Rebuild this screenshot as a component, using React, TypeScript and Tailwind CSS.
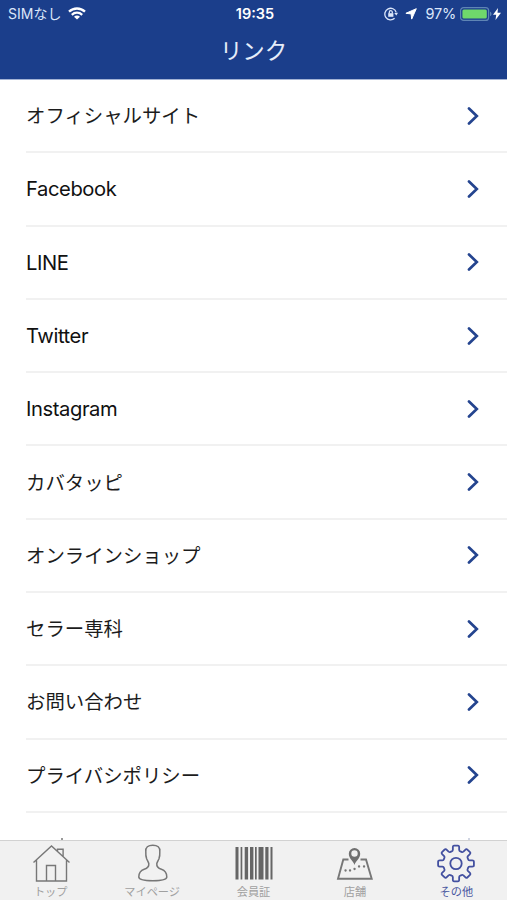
import type { ReactNode } from 'react';

const links = [
  { label: 'オフィシャルサイト' },
  { label: 'Facebook', latin: true },
  { label: 'LINE', latin: true },
  { label: 'Twitter', latin: true },
  { label: 'Instagram', latin: true },
  { label: 'カバタッピ' },
  { label: 'オンラインショップ' },
  { label: 'セラー専科' },
  { label: 'お問い合わせ' },
  { label: 'プライバシポリシー' },
];

function StatusBar() {
  return (
    <div className="flex h-7 items-center justify-between pl-2 pr-[5px] text-[14px] leading-none">
      <div className="flex w-[180px] items-center gap-[7px]">
        <span className="text-[#dbe6fa]">SIMなし</span>
        <svg className="-mt-px" width="18" height="13" viewBox="0 0 18 13" fill="none" stroke="white" strokeWidth="2.3">
          <path d="M1 4.7C5.5.4 12.5.4 17 4.7" />
          <path d="M3.8 7.8c3-2.8 7.4-2.8 10.4 0" />
          <path d="M9 12.6 6 9.8c1.7-1.6 4.3-1.6 6 0z" fill="white" stroke="none" />
        </svg>
      </div>
      <span className="text-[14.5px] font-semibold text-white">19:35</span>
      <div className="flex w-[180px] items-center justify-end">
        <svg className="-mt-px" width="14" height="14" viewBox="0 0 14 14" fill="none" stroke="#dbe6fa" strokeWidth="1.3">
          <path d="M12.2 5.4A5.8 5.8 0 1 0 10.6 11.3" />
          <path d="m10.2 6 2.2 2.6L14 5.8z" fill="#dbe6fa" stroke="none" />
          <path d="M5.3 6.4V5.2a1.5 1.5 0 0 1 3 0v1.2" />
          <path d="M4.2 6.2h5.2v3.6H4.2z" fill="#dbe6fa" stroke="none" />
        </svg>
        <svg className="ml-[7px] -mt-px" width="12" height="12" viewBox="0 0 12 12" fill="white" stroke="white" strokeLinejoin="round">
          <path d="M11.3.7.9 5.3l5.2.6.6 5.2z" />
        </svg>
        <span className="ml-2 text-[14.5px] tracking-[-0.2px] text-[#dbe6fa]">97%</span>
        <svg className="ml-1 -mt-px" width="32" height="14" viewBox="0 0 32 14">
          <rect x=".6" y=".6" width="28" height="12.8" rx="3" fill="none" stroke="#5f85b5" strokeWidth="1.2" />
          <rect x="2.4" y="2.4" width="24.4" height="9.2" rx="1.5" fill="#6fd86b" />
          <path d="M30 4.8c2 .7 2 3.7 0 4.4z" fill="#5f85b5" />
        </svg>
        <svg className="ml-px mr-px -mt-px" width="8" height="12" viewBox="0 0 8 12" fill="white">
          <path d="M5 0 0 6.8h3.2L2.5 12 8 4.8H4.5z" />
        </svg>
      </div>
    </div>
  );
}

function LinkRow({ label, latin }: { label: string; latin?: boolean }) {
  return (
    <li className="ml-[26px] flex h-[73.3px] shrink-0 items-center justify-between border-b-2 border-[#f1f1f1] pr-[28px]">
      <span className={latin ? 'pt-px text-[20.2px] tracking-[-0.42px] text-[#111]' : 'pt-[2px] text-[19.4px]'}>{label}</span>
      <svg width="12" height="18" viewBox="0 0 12 18" fill="none" stroke="#24448f" strokeWidth="2.7" strokeLinecap="round">
        <path d="m2 1.5 7.8 7.5L2 16.5" />
      </svg>
    </li>
  );
}

function Tab({ label, active, children }: { label: string; active?: boolean; children: ReactNode }) {
  return (
    <button className={`flex flex-1 flex-col items-center pt-[3px] ${active ? 'text-[#4a579f]' : 'text-[#a0a0a0]'}`}>
      <svg width="40" height="40" viewBox="0 0 40 40" fill="none" stroke={active ? '#4350a0' : '#777'} strokeWidth="1.4">
        {children}
      </svg>
      <span className="text-[11.2px] leading-[16px]">{label}</span>
    </button>
  );
}

// One tooth of the gear every 45 degrees
const gearAngles = [0, 45, 90, 135, 180, 225, 270, 315];

function gearPath() {
  const point = (radius: number, degrees: number) => {
    const angle = (degrees * Math.PI) / 180;
    return `${(20 + radius * Math.sin(angle)).toFixed(2)} ${(19.5 - radius * Math.cos(angle)).toFixed(2)}`;
  };
  const parts = gearAngles.map((a) =>
    [
      `${point(14, a - 13)} L${point(16.5, a - 11)}`,
      `Q${point(18.2, a - 10)} ${point(18, a - 6)}`,
      `L${point(18, a + 6)}`,
      `Q${point(18.2, a + 10)} ${point(16.5, a + 11)}`,
      `L${point(14, a + 13)}`,
      `Q${point(12.8, a + 15)} ${point(12.9, a + 19)}`,
      `L${point(12.9, a + 26)}`,
      `Q${point(12.8, a + 30)} `,
    ].join(' ')
  );
  return `M${parts.join('')}${point(14, -13)}Z`;
}

export default function App() {
  return (
    <div className="flex h-[900px] w-[507px] flex-col overflow-hidden bg-white font-['Inter','Noto_Sans_CJK_JP',sans-serif]">
      <header className="h-[80px] shrink-0 border-b border-[#a3b2d4] bg-[#1b3e8b]">
        <StatusBar />
        <h1 className="pt-px text-center text-[22.4px] leading-[44px] text-[#e6edf9]">リンク</h1>
      </header>

      <ul className="relative flex min-h-0 flex-1 flex-col overflow-hidden text-[#1c1c1c]">
        {links.map((link) => (
          <LinkRow key={link.label} label={link.label} latin={link.latin} />
        ))}
        {/* Tips of the next row, cut off by the tab bar */}
        <li className="absolute bottom-0 left-[61px] h-[2px] w-[2px] bg-[#999]" />
        <li className="absolute bottom-0 left-[468px] h-[2px] w-[2px] bg-[#d0d5e2]" />
      </ul>

      <nav className="flex h-[60px] shrink-0 border-t border-[#d2d2d2] bg-[#f1f1f1]">
        <Tab label="トップ">
          <path d="M2.5 18.5 20.5 2l18 16.5M5.5 16.3V37h30V16.3M26.5 7.5V5.2h5.6v7M15.5 37V21.5h9V37" />
        </Tab>
        <Tab label="マイページ">
          <path
            d="M20.8 1.2c-4.8 0-7.4 2.2-7 6.3-.2 3 .2 5.5.9 7.5.8 1.8 1.6 3 2.1 4.5.4 3.5-1.6 4.8-4.6 5.8-4 1.4-5.4 3.7-5.4 7.7 0 2.8 5 3.7 14 3.7s14-.9 14-3.7c0-4-1.4-6.3-5.400-7.7-3-1-5-2.3-4.600-5.8.5-1.5 1.3-2.7 2.1-4.5.7-2 1.1-4.5.9-7.5.4-4.1-2.2-6.3-7-6.3z"
            strokeWidth="1.5"
          />
        </Tab>
        <Tab label="会員証">
          <path
            d="M1.5 3h3v32.500h-3zM6.600 3h1.700v32.500H6.600zM10.700 3h3.400v32.500h-3.400zM16 3h3.400v32.500H16zM21 3h1.700v32.500H21zM24.500 3h5v32.500h-5zM31.300 3h3.200v32.500h-3.200zM36.500 3h2v32.500h-2z"
            fill="#666"
            stroke="none"
          />
        </Tab>
        <Tab label="店舗">
          <path d="M13.5 15.5H8.3L3 34.7h33.7L31 15.5h-5.5" strokeWidth="1.9" />
          <path d="M19.5 21c-1-4-5.700-6.500-5.700-11.300a5.700 5.700 0 0 1 11.400 0c0 4.800-4.700 7.300-5.700 11.300zm0-8.300a3.200 3.200 0 1 0 0-6.400 3.200 3.200 0 0 0 0 6.400z" fill="#707070" fillRule="evenodd" stroke="none" />
          <path d="M10.5 26.5h.1M15 26.5h.1M19.5 25h.1M24 22.5h.1M29 22.5h.1" strokeWidth="2.3" strokeLinecap="round" />
        </Tab>
        <Tab label="その他" active>
          <path d={gearPath()} strokeWidth="1.8" strokeLinejoin="round" />
          <circle cx="20" cy="19.5" r="5.7" strokeWidth="1.8" />
        </Tab>
      </nav>
    </div>
  );
}
